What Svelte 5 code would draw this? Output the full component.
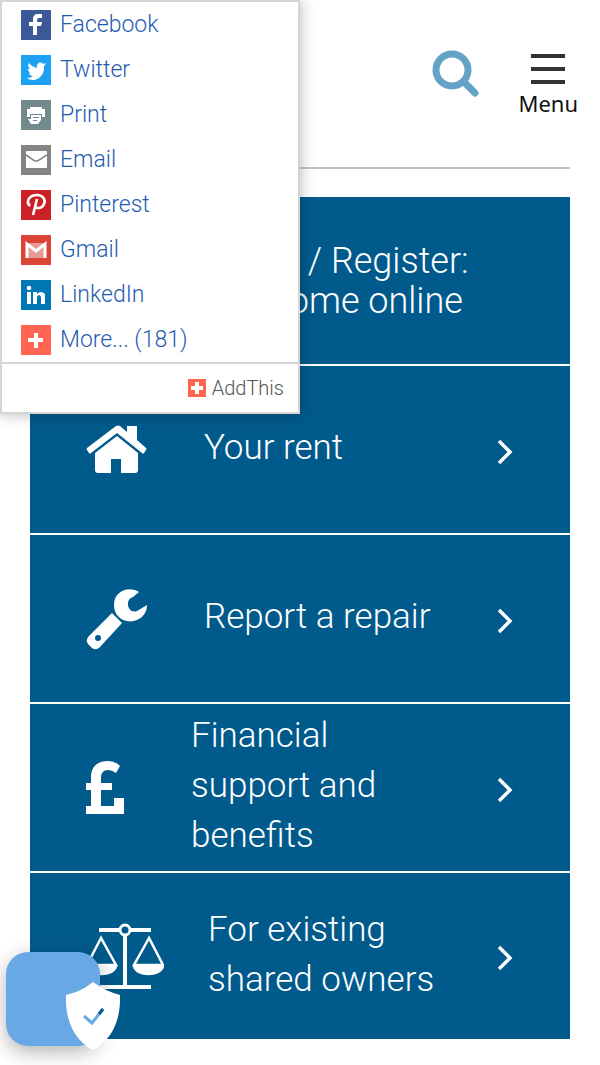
<script lang="ts">
  const shares = [
    { id: "facebook", name: "Facebook", color: "#3b5998" },
    { id: "twitter", name: "Twitter", color: "#1da1f2" },
    { id: "print", name: "Print", color: "#738a8d" },
    { id: "email", name: "Email", color: "#848484" },
    { id: "pinterest", name: "Pinterest", color: "#cb2027" },
    { id: "gmail", name: "Gmail", color: "#db4437" },
    { id: "linkedin", name: "LinkedIn", color: "#0077b5" },
    { id: "more", name: "More... (181)", color: "#ff6550" },
  ];

  const tiles = [
    { id: "rent", label: "Your rent" },
    { id: "repair", label: "Report a repair" },
    { id: "support", label: "Financial support and benefits" },
    { id: "owners", label: "For existing shared owners" },
  ];
</script>

<header class="header">
  <button class="search" type="button" aria-label="Search">
    <svg viewBox="0 0 48 48" width="48" height="48" fill="none" stroke="#64a2c8">
      <circle cx="20" cy="20" r="16" stroke-width="7" />
      <path d="M32 32l11 11" stroke-width="7" stroke-linecap="round" />
    </svg>
  </button>
  <button class="menu" type="button">
    <span class="bars"></span>
    <span>Menu</span>
  </button>
</header>

<main class="tiles">
  <a class="tile tile-login" href="#login">
    <span class="icon"></span>
    <span class="label">Login / Register:<br />My home online</span>
  </a>
  {#each tiles as tile}
    <a class="tile tile-{tile.id}" href="#{tile.id}">
      <span class="icon">
        {#if tile.id === "rent"}
          <svg viewBox="0 0 62 50" width="62" height="50" fill="#fff">
            <path d="M30 1q2-1 4 0l7 6V1h10v14l9 8q1 1 0 2l-2 3q-1 1-2 0L31 8 5 28q-1 1-2 0l-2-3q-1-1 0-2z" />
            <path d="M31 11l21 17v17q0 3-3 3H35V34H25v14H12q-3 0-3-3V28z" />
          </svg>
        {:else if tile.id === "repair"}
          <svg viewBox="0 0 62 62" width="62" height="62" fill="#fff">
            <path d="M53 4C44-2 28 2 28 17c0 12 10 18 20 16 8-2 13-8 13-16l-10 6c-5 2-9-2-9-7 0-4 2-6 5-7z" />
            <path fill-rule="evenodd" d="M26 25l10 10L14 59q-4 4-8 1l-4-4q-3-4 1-8zM12 47a3 3 0 1 0 0 6 3 3 0 0 0 0-6z" />
          </svg>
        {:else if tile.id === "support"}
          <svg viewBox="0 0 40 54" width="40" height="54" fill="#fff">
            <path d="M5 22v-6C5 6 11 0 22 0q7 0 12 5l-4 7q-4-3-8-3-7 0-7 8v5h11v7H15v16h13v-8h10v16H0v-8h5V29H0v-7z" />
          </svg>
        {:else}
          <svg viewBox="0 0 78 68" width="78" height="68" fill="none" stroke="#fff">
            <path d="M13 8h52M13 65h52M39 12v53" stroke-width="4" />
            <circle cx="39" cy="8" r="5" stroke-width="3" fill="#005a8c" />
            <path d="M15 16L1 43h29zM63 16L48 43h29z" stroke-width="2.5" />
            <path d="M0 43h31v2c-3 11-28 11-31 0zM47 43h31v2c-3 11-28 11-31 0z" fill="#fff" stroke="none" />
          </svg>
        {/if}
      </span>
      <span class="label">{tile.label}</span>
      <svg class="chevron" viewBox="0 0 16 26" width="16" height="26">
        <path d="M2 2l11 11L2 24" fill="none" stroke="#fff" stroke-width="3.5" />
      </svg>
    </a>
  {/each}
</main>

<aside class="share">
  <ul>
    {#each shares as item}
      <li>
        <a href="#{item.id}">
          <svg viewBox="0 0 30 30" width="30" height="30">
            <rect width="30" height="30" fill={item.color} />
            {#if item.id === "facebook"}
              <path d="M12 25V16H8v-4h4V9c0-3 2-5 5-5h4v4h-3q-2 0-2 2v2h5l-1 4h-4v9z" fill="#fff" />
            {:else if item.id === "twitter"}
              <path d="M25 9l-2 2c1 8-5 14-11 14q-4 0-6-2 4 0 6-2-3 0-4-3h2q-3-1-3-4h2q-3-3-1-6 3 4 8 5c-1-5 4-7 6-4l3-1-1 2z" fill="#fff" />
            {:else if item.id === "print"}
              <path d="M9 7h12v2h3v8h-3v-3H9v3H6V9h3zM10 15h10v5l-3 4h-7l-3-5h3zM12 17v1h6v-1zM12 20v1h4v-1z" fill="#fff" fill-rule="evenodd" />
            {:else if item.id === "email"}
              <rect x="5" y="6" width="21" height="17" rx="1" fill="#fff" />
              <path d="M5 10c4 2 7 6 10 6s7-4 11-6" fill="none" stroke={item.color} stroke-width="1.5" />
            {:else if item.id === "pinterest"}
              <path d="M9 16c-5-5 0-11 7-11 6 0 9 5 7 9-2 5-8 5-9 2M16 9l-4 16" fill="none" stroke="#fff" stroke-width="2.6" />
            {:else if item.id === "gmail"}
              <rect x="5" y="8" width="20" height="15" rx="1" fill="#e99a93" />
              <path d="M6 23V9l9 7 9-7v14" fill="none" stroke="#fff" stroke-width="3" />
            {:else if item.id === "linkedin"}
              <path d="M6 12h4v12H6zM12 12h4v2q4-4 8 0v10h-4v-7q-2-4-4 0v7h-4z" fill="#fff" />
              <circle cx="8" cy="8" r="2.3" fill="#fff" />
            {:else}
              <path d="M15 8v15M7 15h15" stroke="#fff" stroke-width="4" />
            {/if}
          </svg>
          {item.name}
        </a>
      </li>
    {/each}
  </ul>
  <a class="brand" href="#addthis">
    <svg viewBox="0 0 18 18" width="18" height="18">
      <rect width="18" height="18" fill="#ff6550" />
      <path d="M9 3v12M3 9h12" stroke="#fff" stroke-width="4" />
    </svg>
    AddThis
  </a>
</aside>

<button class="consent" type="button" aria-label="Cookie settings">
  <svg viewBox="0 0 56 70" width="56" height="70">
    <path d="M28 1q12 9 27 13c1 28-10 46-27 55C11 60 0 42 1 14 16 10 20 7 28 1z" fill="#fff" />
    <path d="M19 35l8 7 11-14" fill="none" stroke="#68a9e5" stroke-width="3" />
    <path d="M34 33l4-5" fill="none" stroke="#005a8c" stroke-width="3" />
  </svg>
</button>

<style>
  :global(body) {
    margin: 0;
    background: #fff;
    font-family: Roboto, "Liberation Sans", sans-serif;
    font-weight: 300;
  }

  a {
    text-decoration: none;
  }

  button {
    border: 0;
    padding: 0;
    background: none;
    cursor: pointer;
  }

  svg {
    display: block;
    flex: none;
  }

  .header {
    display: flex;
    justify-content: flex-end;
    align-items: flex-start;
    gap: 38px;
    box-sizing: border-box;
    height: 169px;
    margin: 0 30px;
    padding-top: 50px;
    border-bottom: 2px solid #c3c3c3;
  }

  .menu {
    display: flex;
    flex-direction: column;
    align-items: center;
    gap: 4px;
    margin-right: -8px;
    padding-top: 4px;
    color: #111;
    font: 400 22px/30px "Noto Sans", sans-serif;
  }

  .bars {
    box-sizing: border-box;
    width: 34px;
    height: 30px;
    border: solid #333;
    border-width: 4px 0;
    background: linear-gradient(#333, #333) center / 100% 4px no-repeat;
  }

  .tiles {
    display: flex;
    flex-direction: column;
    gap: 2px;
    margin: 28px 30px 24px;
  }

  .tile {
    display: flex;
    align-items: center;
    box-sizing: border-box;
    min-height: 167px;
    padding: 0 57px 0 56px;
    background: #005a8c;
    color: #fff;
    font-size: 35px;
    line-height: 50px;
  }

  .tile:last-child {
    min-height: 166px;
  }

  .icon {
    flex: none;
    width: 118px;
  }

  .tile-login {
    font-size: 36px;
    line-height: 40px;
  }

  .tile-login .icon {
    width: 126px;
  }

  .tile-support .icon {
    width: 105px;
  }

  .tile-owners .icon {
    width: 122px;
  }

  .label {
    flex: 1;
    max-width: 270px;
  }

  .tile:not(.tile-login) .label {
    padding-bottom: 3px;
  }

  .tile-support .label {
    max-width: 220px;
  }

  .chevron {
    margin-top: 4px;
    margin-left: auto;
  }

  .share {
    position: absolute;
    top: 0;
    left: 0;
    box-sizing: border-box;
    width: 300px;
    border: 2px solid #d5d5d5;
    background: #fff;
    box-shadow: 0 0 14px rgba(0, 0, 0, 0.3);
  }

  .share ul {
    margin: 0;
    padding: 0;
    list-style: none;
  }

  .share li a {
    display: flex;
    align-items: center;
    gap: 9px;
    height: 45px;
    padding-left: 19px;
    color: #1f5cb0;
    font-size: 23px;
  }

  .brand {
    display: flex;
    justify-content: flex-end;
    align-items: center;
    gap: 6px;
    height: 48px;
    padding-right: 14px;
    border-top: 2px solid #d5d5d5;
    color: #555;
    font-size: 20px;
  }

  .consent {
    position: fixed;
    left: 6px;
    bottom: 19px;
    width: 94px;
    height: 94px;
    border-radius: 22px;
    background: #68a9e5;
    box-shadow: 0 6px 20px rgba(0, 0, 0, 0.3);
  }

  .consent svg {
    position: absolute;
    right: -21px;
    bottom: -5px;
  }
</style>
